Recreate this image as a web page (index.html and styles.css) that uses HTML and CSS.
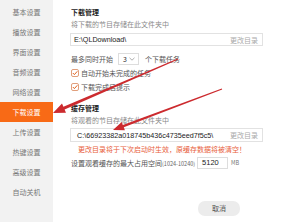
FILE: index.html
```html
<!DOCTYPE html>
<html>
<head>
<meta charset="utf-8">
<link rel="stylesheet" href="styles.css">
</head>
<body>
<div class="app">
  <ul class="side">
    <li class="item">基本设置</li>
    <li class="item">播放设置</li>
    <li class="item">界面设置</li>
    <li class="item">音频设置</li>
    <li class="item">网络设置</li>
    <li class="item active">下载设置</li>
    <li class="item">上传设置</li>
    <li class="item">热键设置</li>
    <li class="item">高级设置</li>
    <li class="item">自动关机</li>
  </ul>
  <div class="main">
    <div class="title">下载管理</div>
    <div class="desc">将下载的节目存储在此文件夹中</div>
    <div class="path"><span class="val">E:\QLDownload\</span><span class="chg">更改目录</span></div>
    <div class="row r-max"><span>最多同时开始</span><span class="sel"><span>3</span><svg width="6" height="4" viewBox="0 0 6 4"><path d="M0.5 0.8 L3 3.2 L5.5 0.8" fill="none" stroke="#999" stroke-width="0.8"/></svg></span><span>个下载任务</span></div>
    <div class="row chk c1"><svg class="box" width="8" height="8" viewBox="0 0 8 8"><rect x="0.5" y="0.5" width="7" height="7" rx="1.5" fill="#fff" stroke="#d9875a" stroke-width="0.8"/><path d="M1.8 4 L3.4 5.6 L6.3 2.3" fill="none" stroke="#e2621d" stroke-width="1"/></svg><span>自动开始未完成的任务</span></div>
    <div class="row chk c2"><svg class="box" width="8" height="8" viewBox="0 0 8 8"><rect x="0.5" y="0.5" width="7" height="7" rx="1.5" fill="#fff" stroke="#d9875a" stroke-width="0.8"/><path d="M1.8 4 L3.4 5.6 L6.3 2.3" fill="none" stroke="#e2621d" stroke-width="1"/></svg><span>下载完成后提示</span></div>
    <div class="title t2">缓存管理</div>
    <div class="desc">将观看的节目存储在此文件夹中</div>
    <div class="path p2"><span class="val">C:\66923382a018745b436c4735eed7f5c5\</span><span class="chg">更改目录</span></div>
    <div class="warn">更改目录将于下次启动时生效，原缓存数据将被清空！</div>
    <div class="row r-size"><span>设置观看缓存的最大占用空间<small>(1024-10240)</small></span><span class="num">5120</span><span class="mb">MB</span></div>
    <div class="foot"><span class="btn">取消</span></div>
  </div>
  <svg class="arrows" width="294" height="222" viewBox="0 0 294 222">
    <polygon points="178.2,59.5 177.8,58.5 63.4,106.8 62,103.6 53,113 66,112.8 64.6,109.6" fill="#cc2a2e"/>
    <polygon points="222.2,89.5 221.8,88.5 122.8,124.9 121.7,121.9 113,130 124.9,130.3 123.8,127.3" fill="#cc2a2e"/>
  </svg>
</div>
</body>
</html>
```
FILE: styles.css
```css
* { box-sizing: border-box; }
html, body { margin: 0; padding: 0; background: #fff; }
body { font-family: "Noto Sans CJK SC", "Noto Sans", sans-serif; font-size: 7px; color: #444; }
.app { position: relative; width: 294px; height: 222px; display: flex; overflow: hidden; }
.side { list-style: none; margin: 0; padding: 2px 0 0; width: 53px; background: #f2f2f2; flex: none; }
.item { height: 20px; line-height: 20px; text-align: center; color: #777; font-size: 7px; }
.item.active { background: #f86a16; color: #fff; }
.main { flex: 1; padding: 7px 0 0 17px; display: flex; flex-direction: column; }
.title { height: 10px; line-height: 10px; font-weight: bold; color: #222; padding-left: 1px; }
.t2 { margin-top: 11px; }
.desc { height: 10px; line-height: 10px; margin-top: 2px; color: #8a8a8a; padding-left: 1px; }
.path { width: 193px; height: 13px; margin-top: 4px; border: 1px solid #e2e2e2; display: flex; align-items: center; justify-content: space-between; padding: 0 4px 0 3px; background: #fff; }
.p2 { height: 14px; margin-top: 3px; padding-left: 6px; }
.val { color: #222; font-family: "Liberation Sans", Arial, sans-serif; font-size: 7.2px; }
.chg { color: #aaa; }
.row { display: flex; align-items: center; color: #555; padding-left: 1px; }
.r-max { height: 12px; margin-top: 7px; }
.sel { width: 21px; height: 12px; margin: 0 6px 0 5px; border: 1px solid #ddd; display: flex; align-items: center; justify-content: space-between; padding: 0 3px 0 4px; color: #333; }
.chk { height: 10px; }
.c1 { margin-top: 3px; }
.c2 { margin-top: 4px; }
.box { margin-right: 2px; flex: none; }
.warn { height: 10px; line-height: 10px; margin-top: 2px; padding-left: 8px; color: #e8603c; }
.r-size { height: 12px; margin-top: 3px; }
.r-size small { font-size: 5.5px; color: #666; }
.num { width: 31px; height: 12px; margin: 0 3px 0 2px; border: 1px solid #ddd; color: #222; padding-left: 4px; line-height: 10px; font-family: "Liberation Sans", Arial, sans-serif; font-size: 7.5px; }
.mb { font-size: 5.5px; color: #777; }
.foot { margin-top: 32px; padding-left: 128px; }
.btn { display: inline-block; width: 42px; height: 15px; line-height: 15px; text-align: center; background: #ececec; border-radius: 7px; color: #555; }
.arrows { position: absolute; left: 0; top: 0; pointer-events: none; }
```
